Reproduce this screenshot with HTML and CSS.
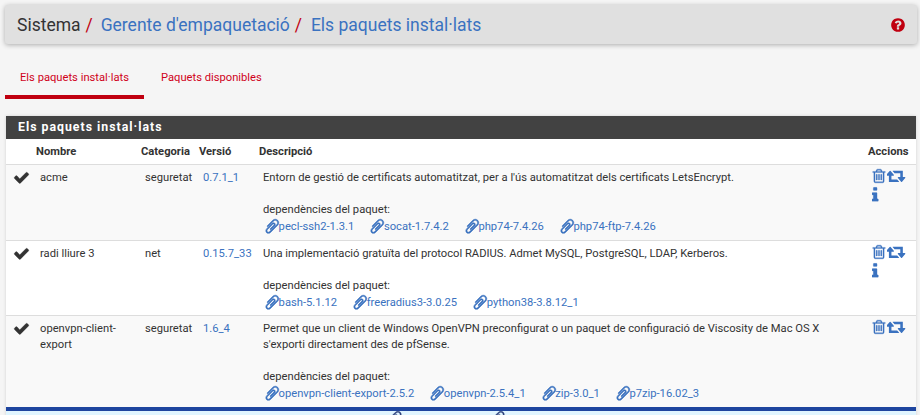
FILE: index.html
```html
<!DOCTYPE html>
<html lang="ca">
<head>
<meta charset="UTF-8">
<meta name="viewport" content="width=device-width, initial-scale=1.0">
<title>Els paquets instal·lats</title>
<link rel="stylesheet" href="styles.css">
</head>
<body>

<svg class="icon-defs" xmlns="http://www.w3.org/2000/svg">
  <symbol id="i-check" viewBox="0 0 1792 1792"><path d="M1671 566q0 40-28 68l-724 724-136 136q-28 28-68 28t-68-28l-136-136-362-362q-28-28-28-68t28-68l136-136q28-28 68-28t68 28l294 295 656-657q28-28 68-28t68 28l136 136q28 28 28 68z"/></symbol>
  <symbol id="i-clip" viewBox="0 0 1792 1792"><path transform="matrix(-1 0 0 1 1792 0)" d="M1596 1385q0 117-79 196t-196 79q-135 0-235-100l-777-776q-113-115-113-271 0-159 110-270t269-111q158 0 273 113l605 606q10 10 10 22 0 16-30.5 46.5t-46.5 30.5q-13 0-23-10l-606-607q-79-77-181-77-106 0-179 75t-73 181q0 105 76 181l776 777q63 63 145 63 64 0 106-42t42-106q0-82-63-145l-581-581q-26-24-60-24-29 0-48 19t-19 48q0 32 25 59l410 410q10 10 10 22 0 16-31 47t-47 31q-12 0-22-10l-410-410q-63-61-63-149 0-82 57-139t139-57q88 0 149 63l581 581q100 98 100 235z"/></symbol>
  <symbol id="i-trash" viewBox="0 0 1792 1792"><path d="M704 736v576q0 14-9 23t-23 9h-64q-14 0-23-9t-9-23v-576q0-14 9-23t23-9h64q14 0 23 9t9 23zm256 0v576q0 14-9 23t-23 9h-64q-14 0-23-9t-9-23v-576q0-14 9-23t23-9h64q14 0 23 9t9 23zm256 0v576q0 14-9 23t-23 9h-64q-14 0-23-9t-9-23v-576q0-14 9-23t23-9h64q14 0 23 9t9 23zm128 724v-948h-896v948q0 22 7 40.5t14.5 27 10.5 8.5h832q3 0 10.5-8.5t14.5-27 7-40.5zm-672-1076h448l-48-117q-7-9-17-11h-317q-10 2-17 11zm928 32v64q0 14-9 23t-23 9h-96v948q0 83-47 143.5t-113 60.5h-832q-66 0-113-58.5t-47-141.5v-952h-96q-14 0-23-9t-9-23v-64q0-14 9-23t23-9h309l70-167q15-37 54-63t79-26h320q40 0 79 26t54 63l70 167h309q14 0 23 9t9 23z"/></symbol>
  <symbol id="i-retweet" viewBox="0 0 1920 1792"><path d="M1216 1376q0 13-9.5 22.5t-22.5 9.5h-960q-8 0-13.5-2t-9-7-5.5-8-3-11.5-1-11.5v-600h-192q-26 0-45-19t-19-45q0-24 15-41l320-384q19-22 49-22t49 22l320 384q15 17 15 41 0 26-19 45t-45 19h-192v384h576q16 0 25 11l160 192q7 10 7 21zm640-416q0 24-15 41l-320 384q-20 23-49 23t-49-23l-320-384q-15-17-15-41 0-26 19-45t45-19h192v-384h-576q-16 0-25-12l-160-192q-7-9-7-20 0-13 9.5-22.5t22.5-9.5h960q8 0 13.5 2t9 7 5.5 8 3 11.5 1 11.5v600h192q26 0 45 19t19 45z"/></symbol>
  <symbol id="i-info" viewBox="576 0 704 1792"><path d="M1216 1344v128q0 26-19 45t-45 19h-512q-26 0-45-19t-19-45v-128q0-26 19-45t45-19h64v-384h-64q-26 0-45-19t-19-45v-128q0-26 19-45t45-19h384q26 0 45 19t19 45v576h64q26 0 45 19t19 45zm-128-1152v192q0 26-19 45t-45 19h-256q-26 0-45-19t-19-45v-192q0-26 19-45t45-19h256q26 0 45 19t19 45z"/></symbol>
  <symbol id="i-help" viewBox="0 0 1792 1792"><path d="M1024 1376v-192q0-14-9-23t-23-9h-192q-14 0-23 9t-9 23v192q0 14 9 23t23 9h192q14 0 23-9t9-23zm256-672q0-88-55.5-163t-138.5-116-170-41q-243 0-371 213-15 24 8 42l132 100q7 6 19 6 16 0 25-12 53-68 86-92 34-24 86-24 48 0 85.5 26t37.5 59q0 38-20 61t-68 45q-63 28-115.5 86.5t-52.5 125.5v36q0 14 9 23t23 9h192q14 0 23-9t9-23q0-19 21.5-49.5t54.5-49.5q32-18 49-28.5t46-35 44.5-48 28-60.5 12.5-81zm384 192q0 209-103 385.5t-279.5 279.5-385.5 103-385.5-103-279.5-279.5-103-385.5 103-385.5 279.5-279.5 385.5-103 385.5 103 279.5 279.5 103 385.5z"/></symbol>
</svg>

<div class="breadcrumb-bar">
  <h1 class="crumbs">
    <span>Sistema</span><span class="sep">/</span>
    <a href="#">Gerente d'empaquetació</a><span class="sep">/</span>
    <a href="#">Els paquets instal·lats</a>
  </h1>
  <a href="#" class="help"><svg><use href="#i-help"/></svg></a>
</div>

<div class="tabs">
  <a href="#" class="tab active">Els paquets instal·lats</a>
  <a href="#" class="tab">Paquets disponibles</a>
</div>

<div class="panel">
  <h2 class="panel-title">Els paquets instal·lats</h2>
  <table>
    <colgroup>
      <col class="c-check"><col class="c-name"><col class="c-cat"><col class="c-ver"><col class="c-desc"><col class="c-act">
    </colgroup>
    <thead>
      <tr>
        <th></th>
        <th>Nombre</th>
        <th>Categoria</th>
        <th>Versió</th>
        <th>Descripció</th>
        <th>Accions</th>
      </tr>
    </thead>
    <tbody>
      <tr>
        <td class="check"><svg><use href="#i-check"/></svg></td>
        <td>acme</td>
        <td>seguretat</td>
        <td><a href="#">0.7.1_1</a></td>
        <td>
          Entorn de gestió de certificats automatitzat, per a l'ús automatitzat dels certificats LetsEncrypt.
          <div class="deps-label">dependències del paquet:</div>
          <div class="deps">
            <a href="#"><svg><use href="#i-clip"/></svg>pecl-ssh2-1.3.1</a>
            <a href="#"><svg><use href="#i-clip"/></svg>socat-1.7.4.2</a>
            <a href="#"><svg><use href="#i-clip"/></svg>php74-7.4.26</a>
            <a href="#"><svg><use href="#i-clip"/></svg>php74-ftp-7.4.26</a>
          </div>
        </td>
        <td class="actions">
          <div class="action-icons">
            <a href="#"><svg class="trash"><use href="#i-trash"/></svg></a>
            <a href="#"><svg class="retweet"><use href="#i-retweet"/></svg></a>
            <a href="#"><svg class="info"><use href="#i-info"/></svg></a>
          </div>
        </td>
      </tr>
      <tr>
        <td class="check"><svg><use href="#i-check"/></svg></td>
        <td>radi lliure 3</td>
        <td>net</td>
        <td><a href="#">0.15.7_33</a></td>
        <td>
          Una implementació gratuïta del protocol RADIUS. Admet MySQL, PostgreSQL, LDAP, Kerberos.
          <div class="deps-label">dependències del paquet:</div>
          <div class="deps">
            <a href="#"><svg><use href="#i-clip"/></svg>bash-5.1.12</a>
            <a href="#"><svg><use href="#i-clip"/></svg>freeradius3-3.0.25</a>
            <a href="#"><svg><use href="#i-clip"/></svg>python38-3.8.12_1</a>
          </div>
        </td>
        <td class="actions">
          <div class="action-icons">
            <a href="#"><svg class="trash"><use href="#i-trash"/></svg></a>
            <a href="#"><svg class="retweet"><use href="#i-retweet"/></svg></a>
            <a href="#"><svg class="info"><use href="#i-info"/></svg></a>
          </div>
        </td>
      </tr>
      <tr>
        <td class="check"><svg><use href="#i-check"/></svg></td>
        <td>openvpn-client-export</td>
        <td>seguretat</td>
        <td><a href="#">1.6_4</a></td>
        <td>
          Permet que un client de Windows OpenVPN preconfigurat o un paquet de configuració de Viscosity de Mac OS X s'exporti directament des de pfSense.
          <div class="deps-label">dependències del paquet:</div>
          <div class="deps">
            <a href="#"><svg><use href="#i-clip"/></svg>openvpn-client-export-2.5.2</a>
            <a href="#"><svg><use href="#i-clip"/></svg>openvpn-2.5.4_1</a>
            <a href="#"><svg><use href="#i-clip"/></svg>zip-3.0_1</a>
            <a href="#"><svg><use href="#i-clip"/></svg>p7zip-16.02_3</a>
          </div>
        </td>
        <td class="actions">
          <div class="action-icons">
            <a href="#"><svg class="trash"><use href="#i-trash"/></svg></a>
            <a href="#"><svg class="retweet"><use href="#i-retweet"/></svg></a>
          </div>
        </td>
      </tr>
    </tbody>
  </table>
  <div class="next-row">
    <svg><use href="#i-clip"/></svg>
    <svg><use href="#i-clip"/></svg>
  </div>
</div>

</body>
</html>
```

FILE: styles.css
```css
html, body {
    height: 100%;
    overflow: hidden;
}
body {
    font-family: Roboto, "Liberation Sans", sans-serif;
    font-size: 11.2px;
    line-height: 16px;
    margin: 0;
    padding: 5px 3px 0 5px;
    box-sizing: border-box;
    background-color: #f5f5f5;
    color: #333;
}
a {
    color: #3a72c0;
    text-decoration: none;
}
svg {
    fill: currentColor;
}
.icon-defs {
    display: none;
}

/* top bar */
.breadcrumb-bar {
    display: flex;
    align-items: center;
    justify-content: space-between;
    height: 39px;
    padding: 0 11px 0 12px;
    background-color: #e0e0e0;
    border-radius: 3px;
    box-shadow: 0 1px 5px rgba(0, 0, 0, 0.3);
}
.crumbs {
    margin: 0;
    font-size: 17.5px;
    font-weight: 400;
    line-height: 24px;
    color: #333;
}
.crumbs a {
    margin-left: 3.5px;
}
.crumbs a:last-child {
    margin-left: 4.5px;
}
.crumbs .sep {
    margin-left: 5px;
    color: #c00010;
}
.help {
    display: flex;
    color: #c00010;
}
.help svg {
    width: 16px;
    height: 16px;
}

/* tabs */
.tabs {
    display: flex;
    margin-top: 22px;
}
.tab {
    box-sizing: border-box;
    height: 33px;
    padding: 0 15px;
    line-height: 24px;
    color: #d0021b;
}
.tab + .tab {
    margin-left: 2px;
}
.tab.active {
    border-bottom: 4px solid #c00010;
}

/* panel */
.panel {
    margin: 17px 1px 0 1px;
    background-color: #fff;
    box-shadow: 0 0 3px rgba(0, 0, 0, 0.15);
}
.panel-title {
    margin: 0;
    height: 23px;
    padding: 0 12px;
    background-color: #424242;
    color: #fff;
    font-size: 12.3px;
    font-weight: 700;
    line-height: 23px;
    letter-spacing: 1px;
}
table {
    width: 100%;
    border-collapse: collapse;
    table-layout: fixed;
}
.c-check { width: 26px; }
.c-name { width: 105px; }
.c-cat { width: 58px; }
.c-ver { width: 60px; }
.c-act { width: 52px; }
th {
    height: 25px;
    padding: 0 4px;
    text-align: left;
    font-weight: 700;
    border-bottom: 1px solid #ddd;
}
td {
    padding: 5px 8px 5px;
    vertical-align: top;
    border-bottom: 1px solid #ddd;
}
tbody tr {
    background-color: #f9f9f9;
}
tbody tr:nth-child(even) {
    background-color: #fff;
}
tbody tr:nth-child(even) td {
    padding-bottom: 4px;
}
tbody tr:last-child td {
    border-bottom: none;
}
.check {
    padding: 4px 0 0 7px;
    color: #333;
}
.check svg {
    display: block;
    width: 17px;
    height: 17px;
    stroke: currentColor;
    stroke-width: 20;
}
.deps-label {
    margin-top: 16px;
}
.deps {
    display: flex;
    gap: 17px;
    height: 17px;
    padding-left: 3px;
}
.deps a {
    display: flex;
    align-items: center;
}
.deps svg {
    width: 16.6px;
    height: 16.6px;
    margin: 0 -2px;
    stroke: currentColor;
    stroke-width: 60;
}
.actions {
    padding: 3px 0 0 7px;
}
.action-icons {
    display: flex;
    flex-wrap: wrap;
    align-items: flex-start;
    width: 36px;
}
.action-icons a {
    display: flex;
}
.action-icons svg {
    width: 16px;
    height: 16px;
    stroke: currentColor;
    stroke-width: 35;
}
.action-icons .retweet {
    width: 19px;
    height: 18px;
    stroke-width: 0;
}
.action-icons .info {
    width: 7px;
    height: 18px;
    margin-left: 1px;
    stroke-width: 20;
}

/* top of the next block, cut off by the window */
.next-row {
    display: flex;
    height: 20px;
    padding-left: 381px;
    gap: 87px;
    border-top: 4px solid #1e459f;
    background-color: #e0f5ff;
    color: #2b3f7a;
}
.next-row svg {
    width: 16px;
    height: 16px;
    margin-top: -1px;
    stroke: currentColor;
    stroke-width: 50;
}
```
